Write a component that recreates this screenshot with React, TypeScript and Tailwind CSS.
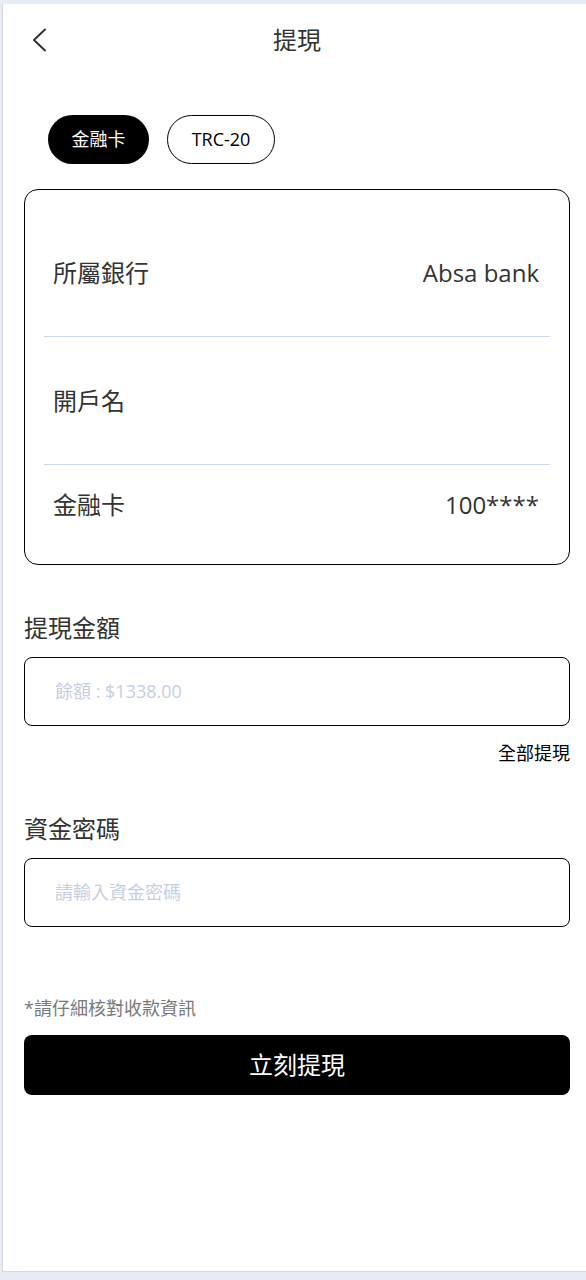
import React, { useState } from 'react';

const font = { fontFamily: '"Open Sans", "Noto Sans CJK TC", sans-serif' };

const BackIcon: React.FC = () => (
  <svg width="16" height="24" viewBox="0 0 16 24" fill="none">
    <polyline points="14,1.5 3,12 14,22.5" stroke="#333" strokeWidth="2" strokeLinecap="round" strokeLinejoin="round" />
  </svg>
);

const App: React.FC = () => {
  const [tab, setTab] = useState(0);

  return (
    <div className="w-[586px] h-[1280px] overflow-hidden bg-[#e8ecf4] pt-[4px] pl-[2px]" style={font}>
      <div className="w-[584px] h-[1268px] bg-white border-l border-b border-[#d4d7dd] pl-[21px] pr-[16px]">
        {/* header */}
        <div className="h-[72px] flex items-center">
          <div className="w-[60px] pl-[7px] flex items-center">
            <BackIcon />
          </div>
          <div className="flex-1 text-center text-[24px] text-[#333]">提現</div>
          <div className="w-[60px]" />
        </div>

        {/* tabs */}
        <div className="mt-[39px] pl-[24px] flex gap-[18px]">
          <button
            onClick={() => setTab(0)}
            className={`h-[49px] w-[101px] rounded-full text-[18px] ${tab === 0 ? 'bg-black text-white' : 'border border-black text-black'}`}
          >
            金融卡
          </button>
          <button
            onClick={() => setTab(1)}
            className={`h-[49px] w-[108px] rounded-full text-[18px] ${tab === 1 ? 'bg-black text-white' : 'border border-black text-black'}`}
          >
            TRC-20
          </button>
        </div>

        {/* card info */}
        <div className="mt-[25px] border border-black rounded-[14px] px-[19px] pt-[19px] pb-[19px]">
          <div className="h-[128px] pl-[9px] pr-[11px] flex items-center justify-between text-[24px] text-[#333] border-b border-[#c8d9ef]">
            <span>所屬銀行</span>
            <span>Absa bank</span>
          </div>
          <div className="h-[128px] pl-[9px] pr-[11px] flex items-center justify-between text-[24px] text-[#333] border-b border-[#c8d9ef]">
            <span>開戶名</span>
            <span></span>
          </div>
          <div className="h-[80px] pl-[9px] pr-[11px] flex items-center justify-between text-[24px] text-[#333]">
            <span>金融卡</span>
            <span>100****</span>
          </div>
        </div>

        {/* amount */}
        <div className="mt-[47px] text-[24px] leading-[32px] text-[#333]">提現金額</div>
        <div className="mt-[13px] h-[69px] border border-black rounded-[8px] flex items-center px-[30px]">
          <input
            className="w-full outline-none text-[18px] placeholder:text-[#c5cfe3]"
            placeholder="餘額 : $1338.00"
          />
        </div>
        <div className="mt-[15px] text-right text-[18px] leading-[24px] text-black">全部提現</div>

        {/* password */}
        <div className="mt-[48px] text-[24px] leading-[32px] text-[#333]">資金密碼</div>
        <div className="mt-[13px] h-[69px] border border-black rounded-[8px] flex items-center px-[30px]">
          <input
            type="password"
            className="w-full outline-none text-[18px] placeholder:text-[#c5cfe3]"
            placeholder="請輸入資金密碼"
          />
        </div>

        <div className="mt-[69px] text-[18px] leading-[24px] text-[#7a7a7a]">*請仔細核對收款資訊</div>
        <button className="mt-[15px] w-full h-[60px] bg-black rounded-[8px] text-white text-[24px]">
          立刻提現
        </button>
      </div>
    </div>
  );
};

export default App;
